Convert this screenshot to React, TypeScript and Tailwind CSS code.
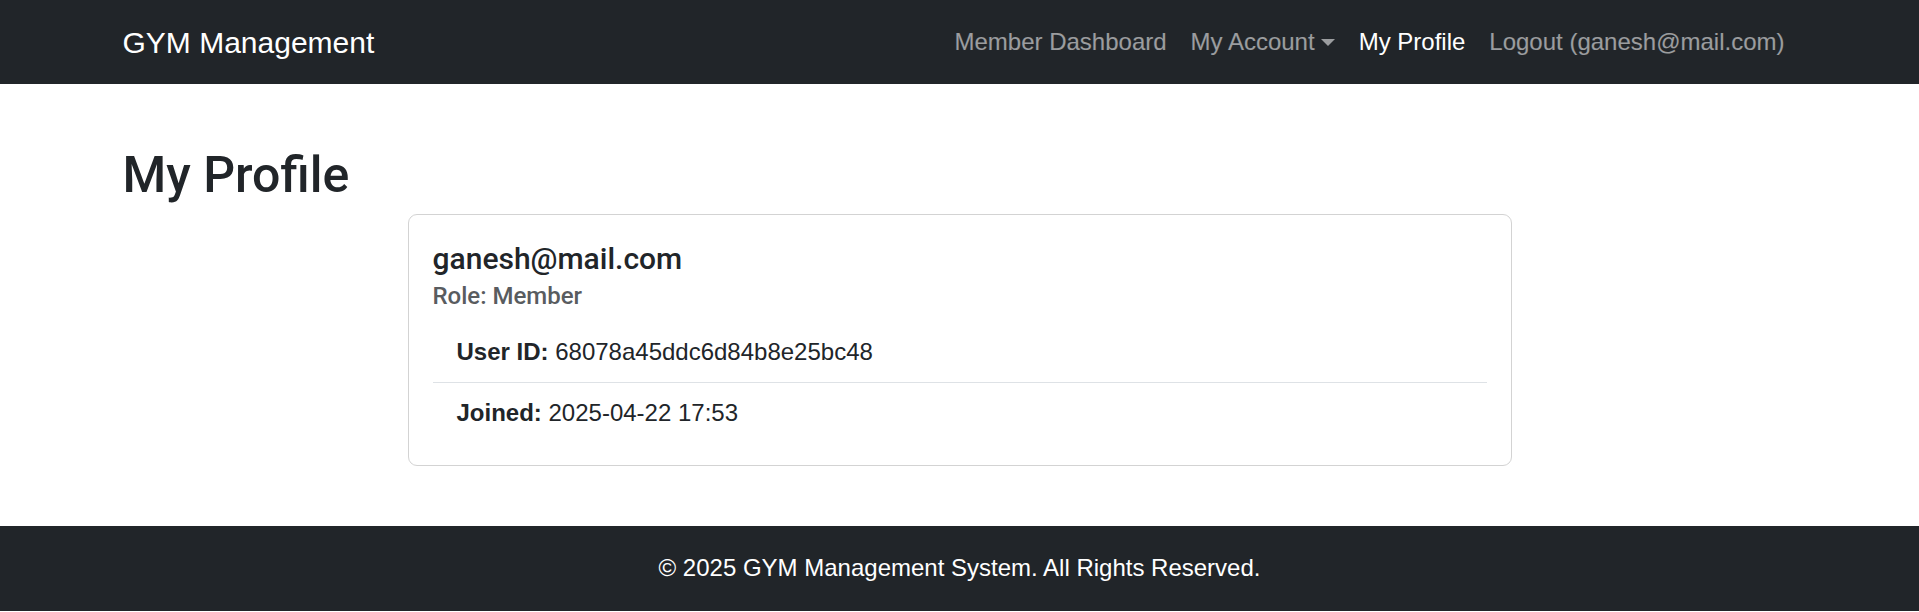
const font = { fontFamily: '"Liberation Sans", Arial, sans-serif' };
const headingFont = { fontFamily: 'Roboto, "Liberation Sans", Arial, sans-serif' };

function Navbar() {
  return (
    <nav className="bg-[#212529] h-[84px]">
      <div className="max-w-[1710px] mx-auto px-[18px] h-full flex items-center justify-between">
        <a className="text-white text-[30px] leading-[45px]">GYM Management</a>
        <ul className="flex items-center text-[24px] leading-[36px]">
          <li><a className="px-[12px] text-white/55">Member Dashboard</a></li>
          <li>
            <a className="px-[12px] text-white/55 inline-flex items-center">
              My Account
              <span className="ml-[6px] w-0 h-0 border-t-[7px] border-t-white/55 border-x-[7px] border-x-transparent"></span>
            </a>
          </li>
          <li><a className="px-[12px] text-white">My Profile</a></li>
          <li><a className="px-[12px] text-white/55">Logout (ganesh@mail.com)</a></li>
        </ul>
      </div>
    </nav>
  );
}

function ProfileCard() {
  return (
    <div className="mx-auto w-[1104px] border border-[#d3d3d3] rounded-[9px] bg-white">
      <div className="px-[24px] pt-[26px] pb-[22px]">
        <h5 className="text-[30px] leading-[36px] font-medium text-[#212529]" style={headingFont}>ganesh@mail.com</h5>
        <h6 className="mt-[5px] text-[24px] leading-[28.8px] font-medium text-[#595c5f]" style={headingFont}>Role: Member</h6>
        <ul className="mt-[11px] text-[24px] leading-[36px] text-[#212529]">
          <li className="px-[24px] py-[12px] border-b border-[#dee2e6]">
            <strong className="font-bold">User ID:</strong> 68078a45ddc6d84b8e25bc48
          </li>
          <li className="px-[24px] py-[12px]">
            <strong className="font-bold">Joined:</strong> 2025-04-22 17:53
          </li>
        </ul>
      </div>
    </div>
  );
}

export default function App() {
  return (
    <div className="bg-white min-h-[612px] flex flex-col" style={font}>
      <Navbar />
      <main className="max-w-[1710px] w-full mx-auto px-[18px] pt-[61px] pb-[60px]">
        <h1 className="text-[50px] leading-[60px] font-medium text-[#212529] mb-[9px]" style={headingFont}>My Profile</h1>
        <ProfileCard />
      </main>
      <footer className="bg-[#212529] h-[85px] flex items-center justify-center text-white text-[24px] leading-[36px]">
        © 2025 GYM Management System. All Rights Reserved.
      </footer>
    </div>
  );
}
